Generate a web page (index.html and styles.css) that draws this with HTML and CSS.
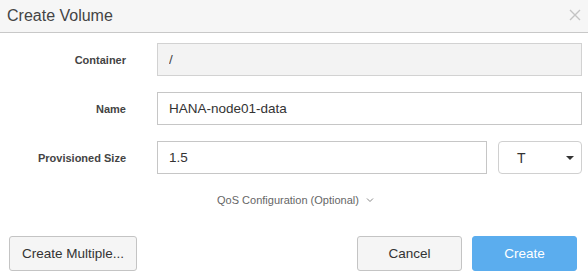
FILE: index.html
```html
<!DOCTYPE html>
<html lang="en">

<head>
    <meta charset="UTF-8" />
    <title>Create Volume</title>
    <link rel="stylesheet" href="styles.css">
</head>

<body>
    <div class="dialog">
        <div class="dialog-header">
            <h1>Create Volume</h1>
            <button class="close" aria-label="Close">
                <svg width="12" height="12" viewBox="0 0 12 12">
                    <path d="M1 1 L11 11 M11 1 L1 11" stroke="#c4c4c4" stroke-width="1.4" fill="none" />
                </svg>
            </button>
        </div>

        <form class="dialog-body">
            <label class="field-label">Container</label>
            <input class="field" type="text" value="/" disabled />

            <label class="field-label">Name</label>
            <input class="field" type="text" value="HANA-node01-data" />

            <label class="field-label">Provisioned Size</label>
            <div class="size-row">
                <input class="field" type="text" value="1.5" />
                <div class="unit-select">
                    <span>T</span>
                    <span class="caret"></span>
                </div>
            </div>
        </form>

        <div class="qos">
            QoS Configuration (Optional)
            <svg width="8" height="6" viewBox="0 0 8 6">
                <path d="M1 1.5 L4 4.5 L7 1.5" stroke="#888" stroke-width="1" fill="none" />
            </svg>
        </div>

        <div class="dialog-footer">
            <button class="btn btn-multiple">Create Multiple...</button>
            <div class="footer-right">
                <button class="btn btn-cancel">Cancel</button>
                <button class="btn btn-primary">Create</button>
            </div>
        </div>
    </div>
</body>

</html>
```

FILE: styles.css
```css
body {
    font-family: "Liberation Sans", Arial, sans-serif;
    background-color: #fff;
    margin: 0;
    padding: 0;
    color: #333;
}

.dialog {
    width: 588px;
    height: 278px;
    background-color: #fff;
}

.dialog-header {
    height: 32px;
    background-color: #f6f6f6;
    border-bottom: 1px solid #c8c8c8;
    display: flex;
    align-items: center;
    justify-content: space-between;
    padding: 0 7px;
}

.dialog-header h1 {
    margin: 0;
    font-size: 16px;
    font-weight: normal;
    color: #444;
    padding-bottom: 1px;
}

.close {
    border: none;
    background: none;
    padding: 0;
    margin-top: -3px;
    width: 12px;
    height: 12px;
    display: flex;
}

.dialog-body {
    display: grid;
    grid-template-columns: 126px 1fr;
    column-gap: 31px;
    row-gap: 16px;
    padding: 10px 6px 0 0;
    margin: 0;
    align-items: center;
}

.field-label {
    text-align: right;
    font-size: 11px;
    font-weight: bold;
    color: #444;
}

.field {
    height: 33px;
    border: 1px solid #c6c6c6;
    padding: 0 11px;
    box-sizing: border-box;
    font-family: inherit;
    font-size: 13.5px;
    color: #333;
    width: 100%;
    background-color: #fff;
    outline: none;
}

.field:disabled {
    background-color: #f3f3f3;
    color: #444;
    border-color: #d2d2d2;
}

.size-row {
    display: flex;
    gap: 11px;
}

.size-row .field {
    flex: 1;
}

.unit-select {
    width: 84px;
    height: 33px;
    box-sizing: border-box;
    border: 1px solid #d0d0d0;
    border-radius: 4px;
    display: flex;
    align-items: center;
    justify-content: space-between;
    padding: 0 7px 0 18px;
    font-size: 14px;
    color: #333;
}

.caret {
    width: 0;
    height: 0;
    border-left: 4px solid transparent;
    border-right: 4px solid transparent;
    border-top: 4px solid #333;
}

.qos {
    text-align: center;
    font-size: 11px;
    color: #666;
    margin-top: 20px;
    padding-left: 3px;
}

.qos svg {
    margin-left: 4px;
    vertical-align: 1px;
}

.dialog-footer {
    display: flex;
    justify-content: space-between;
    padding: 30px 11px 0 9px;
}

.footer-right {
    display: flex;
    gap: 10px;
}

.btn {
    height: 35px;
    border: 1px solid #c4c4c4;
    border-radius: 3px;
    background-color: #f5f5f5;
    font-family: inherit;
    font-size: 13.5px;
    color: #333;
    padding: 0;
    cursor: pointer;
}

.btn-multiple {
    width: 128px;
}

.btn-cancel {
    width: 105px;
}

.btn-primary {
    width: 105px;
    background-color: #5badee;
    border-color: #5badee;
    color: #fff;
}
```
